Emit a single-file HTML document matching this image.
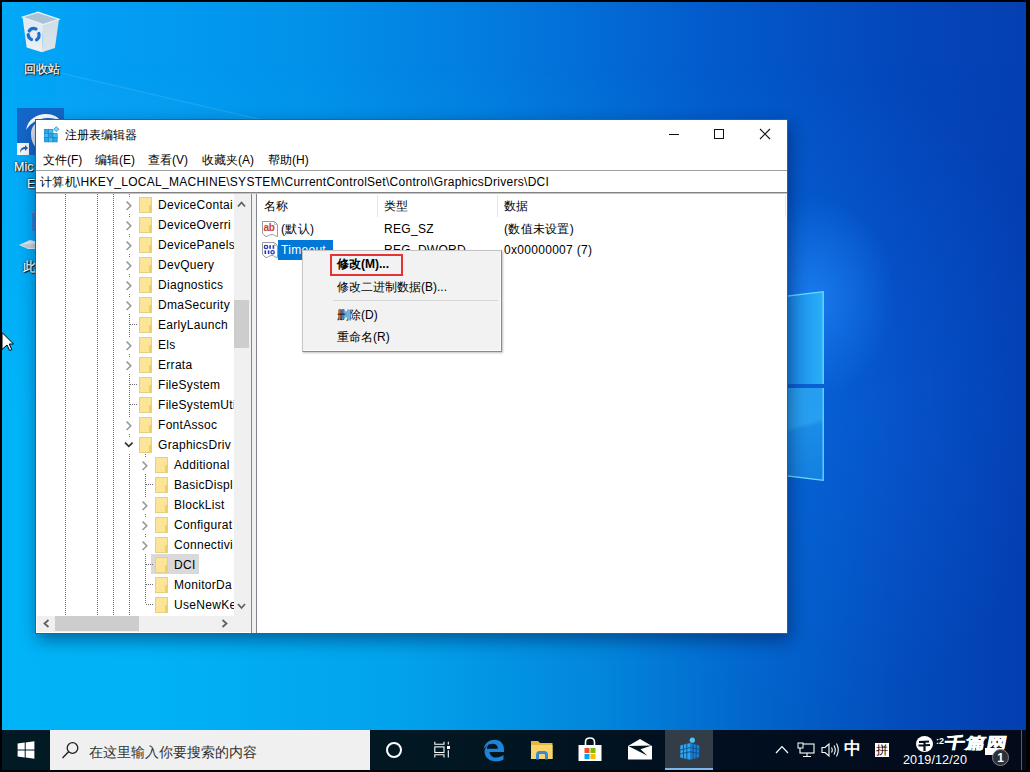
<!DOCTYPE html>
<html><head><meta charset="utf-8">
<style>
*{margin:0;padding:0;box-sizing:border-box}
html,body{width:1030px;height:772px;overflow:hidden;background:#000;font-family:"Liberation Sans",sans-serif}
.abs{position:absolute}
.dt{position:absolute;white-space:nowrap;font-size:12px;line-height:16px;color:#fff;-webkit-text-stroke:0.25px #fff;text-shadow:1px 1px 1px #000,0 0 2px #000,0 0 1px #000}
#desk{position:absolute;left:2px;top:2px;width:1024px;height:728px;overflow:hidden;
 background:linear-gradient(90deg,#02a8f8 0px,#039ef4 98px,#0292ea 298px,#037ade 498px,#035ccd 698px,#0447bb 898px,#0440b2 1024px)}
#desk .bot{position:absolute;left:0;top:0;width:1024px;height:728px;
 background:linear-gradient(90deg,#00b4f8 0px,#00b2f6 148px,#02a2ec 398px,#0286dc 598px,#0266cc 748px,#034cbc 898px,#033eb0 1024px);
 -webkit-mask-image:linear-gradient(180deg,transparent 60px,#000 420px)}
#win{position:absolute;left:35px;top:119px;width:753px;height:515px;background:#fff;border:1px solid #4a5a6a;box-shadow:2px 6px 16px rgba(0,10,50,0.45)}
.t{position:absolute;white-space:nowrap;font-size:12px;color:#000;line-height:16px}
.tl{letter-spacing:0.3px}
#taskbar{position:absolute;left:2px;top:730px;width:1024px;height:40px;background:linear-gradient(90deg,#011a24 0%,#011822 40%,#010f20 70%,#030a1a 100%)}
.fd{position:absolute;width:13px;height:16px;background:#fce596;border:1px solid #e6cf7e}
.fd i{position:absolute;right:0;bottom:0;width:2px;height:7px;background:#f0d060}
.chev{position:absolute;width:6px;height:8px}
.chev:before{content:"";position:absolute;left:-1px;top:1px;width:5px;height:5px;border-right:1.5px solid #a6a6a6;border-top:1.5px solid #a6a6a6;transform:rotate(45deg)}
.chevd{position:absolute;width:9px;height:6px}
.chevd:before{content:"";position:absolute;left:1px;top:-3px;width:6px;height:6px;border-right:1.5px solid #404040;border-bottom:1.5px solid #404040;transform:rotate(45deg)}
.vd{position:absolute;width:1px;background-image:linear-gradient(#707070 50%,transparent 50%);background-size:1px 2px}
.hd{position:absolute;height:1px;background-image:linear-gradient(90deg,#707070 50%,transparent 50%);background-size:2px 1px}
</style></head><body>
<div id="desk">
 <div class="bot"></div>
 <div class="abs" style="left:0;top:0;width:1024px;height:728px;background:radial-gradient(ellipse 260px 320px at 810px 390px,rgba(20,110,255,0.28),rgba(20,110,255,0) 100%),radial-gradient(ellipse 80px 100px at 812px 295px,rgba(40,150,255,0.6),rgba(40,150,255,0) 100%)"></div>
</div>
<svg class="abs" style="left:0;top:40px" width="300" height="90" viewBox="0 40 300 90"><path d="M56,72 L280,124" stroke="rgba(190,235,255,0.13)" stroke-width="1.4"/><polygon points="56,73 280,125 56,125" fill="rgba(120,210,255,0.04)"/></svg>
<!-- logo panes -->
<svg class="abs" style="left:780px;top:285px" width="50" height="200" viewBox="780 285 50 200">
 <defs>
  <linearGradient id="lg1" x1="0" y1="0" x2="1" y2="0"><stop offset="0" stop-color="#1680e2"/><stop offset="0.6" stop-color="#209cf0"/><stop offset="1" stop-color="#2cb0f8"/></linearGradient>
  <linearGradient id="lg2" x1="0" y1="0" x2="0.12" y2="1"><stop offset="0" stop-color="#28a4f2"/><stop offset="0.44" stop-color="#2aa4f2"/><stop offset="0.5" stop-color="#1c90e8"/><stop offset="1" stop-color="#1784e2"/></linearGradient>
 </defs>
 <rect x="780" y="384.5" width="44" height="3" fill="#0c5ed4"/>
 <polygon points="780,297 823.5,291.5 823.5,384 780,384" fill="url(#lg1)"/>
 <polygon points="780,388 823.5,388 823.5,480.5 780,475" fill="url(#lg2)" opacity="0.92"/>
 <path d="M780,297 L823.2,291.7 L823.2,384" fill="none" stroke="#6adaff" stroke-width="1.3"/>
 <path d="M823.2,388 L823.2,480.3 L780,475" fill="none" stroke="#6adaff" stroke-width="1.3"/>
</svg>
<!-- recycle bin -->
<svg class="abs" style="left:16px;top:6px" width="50" height="50" viewBox="16 6 50 50">
 <defs>
  <linearGradient id="rbl" x1="0" y1="0" x2="0" y2="1"><stop offset="0" stop-color="#dfe9f0"/><stop offset="1" stop-color="#eef0f2"/></linearGradient>
  <linearGradient id="rbr" x1="0" y1="0" x2="0" y2="1"><stop offset="0" stop-color="#cfdde8"/><stop offset="1" stop-color="#dde4ea"/></linearGradient>
 </defs>
 <polygon points="22.5,17 43.2,24.5 41.9,52.3 26.7,47.5" fill="url(#rbl)"/>
 <polygon points="43.2,24.5 59,19.3 54.9,48.1 41.9,52.3" fill="url(#rbr)"/>
 <polygon points="22.5,17 38,12.2 59,19.3 43.2,24.5" fill="#b4cadb" stroke="#eaf2f8" stroke-width="1.2"/>
 <polygon points="25,17.2 38,13.4 56,19.4 43,23.2" fill="#a9c2d6"/>
 <g fill="none" stroke="#1c6fd2" stroke-width="3.2" stroke-linecap="round">
  <path d="M29.2,31 A5.6,5.6 0 0 1 36,29"/>
  <path d="M38.8,33.5 A5.6,5.6 0 0 1 36.5,39.8"/>
  <path d="M31.5,39.5 A5.6,5.6 0 0 1 28.2,34.5"/>
 </g>
</svg>
<div class="dt" style="left:24px;top:61px">回收站</div>
<!-- edge icon -->
<div class="abs" style="left:17px;top:108px;width:47px;height:47px;background:#1466c8"></div>
<svg class="abs" style="left:17px;top:108px" width="47" height="47" viewBox="0 0 47 47">
 <path d="M9,22 C11,11 20,6 29,6 C36,6 41,9 44,13 C38,10 30,9 24,11 C17,13 12,17 9,22 Z" fill="#fff"/>
 <path d="M14,26 C14,18 19,14 24,14 C20,18 18,22 18,28 C18,36 22,41 28,44 C20,43 14,36 14,26 Z" fill="#dfe6ee"/>
</svg>
<div class="abs" style="left:17px;top:143px;width:12px;height:12px;background:#f4f6f8"></div>
<svg class="abs" style="left:17px;top:143px" width="12" height="12" viewBox="0 0 12 12"><path d="M3,10 C3,6 5,4 8,4 L8,2 L11,5 L8,8 L8,6 C6,6 4,7 3,10Z" fill="#1f5ea8"/></svg>
<div class="dt" style="left:14px;top:159px;font-size:12.5px">Mic</div>
<div class="dt" style="left:27px;top:176px;font-size:12.5px">E</div>
<!-- this pc -->
<div class="abs" style="left:31px;top:212px;width:6px;height:20px;border:1.5px solid #5a8ec0;background:#2c7fd4"></div>
<svg class="abs" style="left:18px;top:239px" width="20" height="11" viewBox="0 0 20 11"><polygon points="1,6 12,1 20,3 20,10 10,10" fill="#dfe8ee"/><path d="M4,6 L18,6 M6,8 L18,8" stroke="#9fb4c4" stroke-width="0.8"/></svg>
<div class="dt" style="left:23px;top:259px;font-size:12.5px">此</div>
<!-- cursor -->
<svg class="abs" style="left:1px;top:331px" width="16" height="22" viewBox="0 0 16 22"><path d="M1,1.5 L12.5,13 L8.2,13 L10.8,18.5 L8.6,19.5 L6,14 L1,18.5 Z" fill="#fff" stroke="#000" stroke-width="1"/></svg>

<div id="win"></div>
<!-- regedit icon -->
<svg class="abs" style="left:43px;top:125px" width="18" height="18" viewBox="0 0 18 18">
 <g stroke="#1a88c8" stroke-width="0.7">
  <rect x="1.3" y="4.3" width="4.3" height="4.2" fill="#2aa6e4"/><rect x="5.6" y="4.3" width="4.3" height="4.2" fill="#46bdf0"/>
  <rect x="1.3" y="8.5" width="4.3" height="4.2" fill="#46bdf0"/><rect x="5.6" y="8.5" width="4.3" height="4.2" fill="#2aa6e4"/><rect x="9.9" y="8.5" width="4.3" height="4.2" fill="#46bdf0"/>
  <rect x="1.3" y="12.7" width="4.3" height="4.2" fill="#2aa6e4"/><rect x="5.6" y="12.7" width="4.3" height="4.2" fill="#46bdf0"/><rect x="9.9" y="12.7" width="4.3" height="4.2" fill="#2aa6e4"/>
 </g>
 <rect x="11.6" y="2.4" width="3.6" height="3.6" transform="rotate(45 13.4 4.2)" fill="#7ed6fa" stroke="#1a88c8" stroke-width="0.7"/>
</svg>
<!-- caption buttons -->
<div class="abs" style="left:669px;top:134px;width:10px;height:1px;background:#111"></div>
<div class="abs" style="left:714px;top:129px;width:10px;height:10px;border:1px solid #111"></div>
<svg class="abs" style="left:759px;top:128px" width="12" height="12" viewBox="0 0 12 12"><path d="M1,1 L11,11 M11,1 L1,11" stroke="#111" stroke-width="1.1"/></svg>
<!-- title -->
<div class="t" style="left:65px;top:127px">注册表编辑器</div>
<div class="t" style="left:43px;top:152px">文件(F)</div>
<div class="t" style="left:95px;top:152px">编辑(E)</div>
<div class="t" style="left:148px;top:152px">查看(V)</div>
<div class="t" style="left:202px;top:152px">收藏夹(A)</div>
<div class="t" style="left:268px;top:152px">帮助(H)</div>
<!-- address -->
<div class="abs" style="left:36px;top:170px;width:751px;height:23px;border-top:1px solid #a0a0a0;border-bottom:1px solid #828282"></div>
<div class="t tl" style="left:40px;top:174px;letter-spacing:0.28px">计算机\HKEY_LOCAL_MACHINE\SYSTEM\CurrentControlSet\Control\GraphicsDrivers\DCI</div>
<!-- panes -->
<div class="abs" style="left:36px;top:193px;width:751px;height:440px;background:#f0f0f0"></div>
<div class="abs" style="left:36px;top:193px;width:216px;height:440px;background:#fff;border-right:1px solid #828790"></div>
<div class="abs" style="left:256px;top:193px;width:531px;height:440px;background:#fff;border-left:1px solid #828790"></div>
<div class="abs" style="left:36px;top:193px;width:751px;height:1px;background:#c4c4c4"></div>
<!-- tree clip -->
<div class="abs" style="left:37px;top:194px;width:197px;height:422px;overflow:hidden">
 <div class="abs" style="left:-37px;top:-194px;width:400px;height:700px">
  <div class="vd" style="left:65px;top:194px;height:422px"></div>
  <div class="vd" style="left:97px;top:194px;height:422px"></div>
  <div class="vd" style="left:113px;top:194px;height:422px"></div>
  <div class="vd" style="left:129px;top:194px;height:422px"></div>
  <div class="vd" style="left:145px;top:454px;height:150px"></div>
<div class="fd" style="left:139px;top:197px"><i></i></div>
<div class="t tl" style="left:158px;top:197px">DeviceContai</div>
<svg class="abs" style="left:124px;top:197px" width="11" height="16" viewBox="0 0 11 16"><rect width="11" height="16" fill="#fff"/><path d="M2.6,4.6 L6.8,8.8 L2.6,13" fill="none" stroke="#9a9a9a" stroke-width="1.6"/></svg>
<div class="fd" style="left:139px;top:217px"><i></i></div>
<div class="t tl" style="left:158px;top:217px">DeviceOverri</div>
<svg class="abs" style="left:124px;top:217px" width="11" height="16" viewBox="0 0 11 16"><rect width="11" height="16" fill="#fff"/><path d="M2.6,4.6 L6.8,8.8 L2.6,13" fill="none" stroke="#9a9a9a" stroke-width="1.6"/></svg>
<div class="fd" style="left:139px;top:237px"><i></i></div>
<div class="t tl" style="left:158px;top:237px">DevicePanels</div>
<svg class="abs" style="left:124px;top:237px" width="11" height="16" viewBox="0 0 11 16"><rect width="11" height="16" fill="#fff"/><path d="M2.6,4.6 L6.8,8.8 L2.6,13" fill="none" stroke="#9a9a9a" stroke-width="1.6"/></svg>
<div class="fd" style="left:139px;top:257px"><i></i></div>
<div class="t tl" style="left:158px;top:257px">DevQuery</div>
<svg class="abs" style="left:124px;top:257px" width="11" height="16" viewBox="0 0 11 16"><rect width="11" height="16" fill="#fff"/><path d="M2.6,4.6 L6.8,8.8 L2.6,13" fill="none" stroke="#9a9a9a" stroke-width="1.6"/></svg>
<div class="fd" style="left:139px;top:277px"><i></i></div>
<div class="t tl" style="left:158px;top:277px">Diagnostics</div>
<svg class="abs" style="left:124px;top:277px" width="11" height="16" viewBox="0 0 11 16"><rect width="11" height="16" fill="#fff"/><path d="M2.6,4.6 L6.8,8.8 L2.6,13" fill="none" stroke="#9a9a9a" stroke-width="1.6"/></svg>
<div class="fd" style="left:139px;top:297px"><i></i></div>
<div class="t tl" style="left:158px;top:297px">DmaSecurity</div>
<svg class="abs" style="left:124px;top:297px" width="11" height="16" viewBox="0 0 11 16"><rect width="11" height="16" fill="#fff"/><path d="M2.6,4.6 L6.8,8.8 L2.6,13" fill="none" stroke="#9a9a9a" stroke-width="1.6"/></svg>
<div class="fd" style="left:139px;top:317px"><i></i></div>
<div class="t tl" style="left:158px;top:317px">EarlyLaunch</div>
<div class="hd" style="left:130px;top:324px;width:8px"></div>
<div class="fd" style="left:139px;top:337px"><i></i></div>
<div class="t tl" style="left:158px;top:337px">Els</div>
<svg class="abs" style="left:124px;top:337px" width="11" height="16" viewBox="0 0 11 16"><rect width="11" height="16" fill="#fff"/><path d="M2.6,4.6 L6.8,8.8 L2.6,13" fill="none" stroke="#9a9a9a" stroke-width="1.6"/></svg>
<div class="fd" style="left:139px;top:357px"><i></i></div>
<div class="t tl" style="left:158px;top:357px">Errata</div>
<svg class="abs" style="left:124px;top:357px" width="11" height="16" viewBox="0 0 11 16"><rect width="11" height="16" fill="#fff"/><path d="M2.6,4.6 L6.8,8.8 L2.6,13" fill="none" stroke="#9a9a9a" stroke-width="1.6"/></svg>
<div class="fd" style="left:139px;top:377px"><i></i></div>
<div class="t tl" style="left:158px;top:377px">FileSystem</div>
<div class="hd" style="left:130px;top:384px;width:8px"></div>
<div class="fd" style="left:139px;top:397px"><i></i></div>
<div class="t tl" style="left:158px;top:397px">FileSystemUti</div>
<div class="hd" style="left:130px;top:404px;width:8px"></div>
<div class="fd" style="left:139px;top:417px"><i></i></div>
<div class="t tl" style="left:158px;top:417px">FontAssoc</div>
<svg class="abs" style="left:124px;top:417px" width="11" height="16" viewBox="0 0 11 16"><rect width="11" height="16" fill="#fff"/><path d="M2.6,4.6 L6.8,8.8 L2.6,13" fill="none" stroke="#9a9a9a" stroke-width="1.6"/></svg>
<div class="fd" style="left:139px;top:437px"><i></i></div>
<div class="t tl" style="left:158px;top:437px">GraphicsDriv</div>
<svg class="abs" style="left:124px;top:437px" width="11" height="16" viewBox="0 0 11 16"><rect width="11" height="16" fill="#fff"/><path d="M1,5.6 L4.8,9.4 L8.6,5.6" fill="none" stroke="#333" stroke-width="1.7"/></svg>
<div class="fd" style="left:155px;top:457px"><i></i></div>
<div class="t tl" style="left:174px;top:457px">Additional</div>
<svg class="abs" style="left:140px;top:457px" width="11" height="16" viewBox="0 0 11 16"><rect width="11" height="16" fill="#fff"/><path d="M2.6,4.6 L6.8,8.8 L2.6,13" fill="none" stroke="#9a9a9a" stroke-width="1.6"/></svg>
<div class="fd" style="left:155px;top:477px"><i></i></div>
<div class="t tl" style="left:174px;top:477px">BasicDispl</div>
<div class="hd" style="left:146px;top:484px;width:8px"></div>
<div class="fd" style="left:155px;top:497px"><i></i></div>
<div class="t tl" style="left:174px;top:497px">BlockList</div>
<svg class="abs" style="left:140px;top:497px" width="11" height="16" viewBox="0 0 11 16"><rect width="11" height="16" fill="#fff"/><path d="M2.6,4.6 L6.8,8.8 L2.6,13" fill="none" stroke="#9a9a9a" stroke-width="1.6"/></svg>
<div class="fd" style="left:155px;top:517px"><i></i></div>
<div class="t tl" style="left:174px;top:517px">Configurat</div>
<svg class="abs" style="left:140px;top:517px" width="11" height="16" viewBox="0 0 11 16"><rect width="11" height="16" fill="#fff"/><path d="M2.6,4.6 L6.8,8.8 L2.6,13" fill="none" stroke="#9a9a9a" stroke-width="1.6"/></svg>
<div class="fd" style="left:155px;top:537px"><i></i></div>
<div class="t tl" style="left:174px;top:537px">Connectivi</div>
<svg class="abs" style="left:140px;top:537px" width="11" height="16" viewBox="0 0 11 16"><rect width="11" height="16" fill="#fff"/><path d="M2.6,4.6 L6.8,8.8 L2.6,13" fill="none" stroke="#9a9a9a" stroke-width="1.6"/></svg>
<div class="abs" style="left:151px;top:554px;width:48px;height:20px;background:#d9d9d9"></div>
<div class="fd" style="left:155px;top:557px"><i></i></div>
<div class="t tl" style="left:174px;top:557px">DCI</div>
<div class="hd" style="left:146px;top:564px;width:8px"></div>
<div class="fd" style="left:155px;top:577px"><i></i></div>
<div class="t tl" style="left:174px;top:577px">MonitorDa</div>
<div class="hd" style="left:146px;top:584px;width:8px"></div>
<div class="fd" style="left:155px;top:597px"><i></i></div>
<div class="t tl" style="left:174px;top:597px">UseNewKe</div>
<div class="hd" style="left:146px;top:604px;width:8px"></div>
 </div>
</div>
<!-- tree v scrollbar -->
<div class="abs" style="left:234px;top:194px;width:17px;height:422px;background:#f0f0f0"></div>
<div class="abs" style="left:234px;top:300px;width:15px;height:48px;background:#cdcdcd"></div>
<!-- tree h scrollbar -->
<div class="abs" style="left:37px;top:616px;width:197px;height:16px;background:#f0f0f0"></div>
<div class="abs" style="left:55px;top:616px;width:84px;height:15px;background:#cdcdcd"></div>
<svg class="abs" style="left:0;top:0;width:300px;height:640px" width="300" height="640" viewBox="0 0 300 640">
 <path d="M238,206.5 L241.5,202.5 L245,206.5" fill="none" stroke="#606060" stroke-width="1.8"/>
 <path d="M238,604 L241.5,608 L245,604" fill="none" stroke="#606060" stroke-width="1.8"/>
 <path d="M48.5,620 L44.5,623.5 L48.5,627" fill="none" stroke="#606060" stroke-width="1.8"/>
 <path d="M222.5,620 L226.5,623.5 L222.5,627" fill="none" stroke="#606060" stroke-width="1.8"/>
</svg>
<div class="abs" style="left:234px;top:616px;width:17px;height:16px;background:#f0f0f0"></div>
<!-- list -->
<div class="t" style="left:264px;top:198px">名称</div>
<div class="abs" style="left:377px;top:195px;width:1px;height:22px;background:#e5e5e5"></div>
<div class="t" style="left:384px;top:198px">类型</div>
<div class="abs" style="left:497px;top:195px;width:1px;height:22px;background:#e5e5e5"></div>
<div class="t" style="left:504px;top:198px">数据</div>
<div class="abs" style="left:785px;top:195px;width:1px;height:22px;background:#ececec"></div>
<svg class="abs" style="left:258px;top:217px" width="22" height="44" viewBox="258 217 22 44">
 <g fill="#fff" stroke="#9a9a9a" stroke-width="1">
  <path d="M262.5,221.5 L274.5,221.5 L277.5,224.5 L277.5,236.5 C275,236.5 274.5,234.5 272,234.5 C269,234.5 268.5,236.5 266,236.5 C264.5,236.5 263.5,233.5 262.5,233.5 Z"/>
  <path d="M262.5,242.5 L274.5,242.5 L277.5,245.5 L277.5,257.5 C275,257.5 274.5,255.5 272,255.5 C269,255.5 268.5,257.5 266,257.5 C264.5,257.5 263.5,254.5 262.5,254.5 Z"/>
 </g>
 <path d="M274.5,221.5 L274.5,224.5 L277.5,224.5 M274.5,242.5 L274.5,245.5 L277.5,245.5" fill="none" stroke="#c0c0c0" stroke-width="1"/>
 <text x="263.6" y="231.2" font-family="Liberation Sans" font-size="10" font-weight="bold" fill="#c8402a" letter-spacing="-0.3">ab</text>
 <g fill="#2a3ab8">
  <ellipse cx="266" cy="247" rx="1.7" ry="1.6" fill="none" stroke="#2a3ab8" stroke-width="1.3"/>
  <rect x="269.3" y="245.2" width="1.6" height="3.6"/><rect x="272.6" y="245.2" width="1.6" height="3.6"/>
  <rect x="264.5" y="250.4" width="1.6" height="3.6"/><rect x="267.8" y="250.4" width="1.6" height="3.6"/>
  <ellipse cx="272.6" cy="252.2" rx="1.7" ry="1.6" fill="none" stroke="#2a3ab8" stroke-width="1.3"/>
 </g>
</svg>
<div class="t tl" style="left:281px;top:221px">(默认)</div>
<div class="t tl" style="left:384px;top:221px">REG_SZ</div>
<div class="t tl" style="left:504px;top:221px">(数值未设置)</div>
<div class="abs" style="left:278px;top:240px;width:55px;height:20px;background:#0078d7"></div>
<div class="t tl" style="left:281px;top:242px;color:#fff">Timeout</div>
<div class="t tl" style="left:384px;top:242px">REG_DWORD</div>
<div class="t tl" style="left:504px;top:242px">0x00000007 (7)</div>
<!-- context menu -->
<div class="abs" style="left:302px;top:250px;width:200px;height:102px;background:#f2f2f2;border:1px solid #c4c4c4;border-right-color:#8a8a8a;border-bottom-color:#8a8a8a;box-shadow:inset -1px -1px 0 #fafafa,1px 1px 2px rgba(0,0,0,0.25)"></div>
<div class="abs" style="left:330px;top:254px;width:73px;height:22px;border:2.5px solid #e53232"></div>
<div class="t" style="left:337px;top:256px;font-weight:bold">修改(M)...</div>
<div class="t" style="left:337px;top:279px">修改二进制数据(B)...</div>
<div class="abs" style="left:333px;top:300px;width:165px;height:1px;background:#d7d7d7"></div>
<div class="t" style="left:337px;top:307px">删除(D)</div>
<div class="t" style="left:337px;top:329px">重命名(R)</div>
<div id="taskbar"></div>
<div class="abs" style="left:0;top:730px;width:1030px;height:42px">
 <svg class="abs" style="left:17px;top:11px" width="18" height="18" viewBox="0 0 18 18"><path d="M0.6,2.6 L7.7,1.6 L7.7,8.5 L0.6,8.5Z M8.7,1.45 L17.4,0.2 L17.4,8.5 L8.7,8.5Z M0.6,9.5 L7.7,9.5 L7.7,16.4 L0.6,15.4Z M8.7,9.5 L17.4,9.5 L17.4,17.8 L8.7,16.55Z" fill="#fff"/></svg>
 <div class="abs" style="left:50px;top:0;width:320px;height:40px;background:#f0f0f0"></div>
 <svg class="abs" style="left:61px;top:11px" width="19" height="19" viewBox="0 0 19 19"><circle cx="11.5" cy="7" r="5.3" fill="none" stroke="#222" stroke-width="1.3"/><path d="M7.6,10.8 L1.5,17" stroke="#222" stroke-width="1.4"/></svg>
 <div class="abs" style="left:89px;top:13px;font-size:13.9px;line-height:18px;color:#333;white-space:nowrap">在这里输入你要搜索的内容</div>
 <div class="abs" style="left:386px;top:12px;width:16px;height:16px;border:2px solid #fff;border-radius:50%"></div>
 <svg class="abs" style="left:430px;top:10px" width="24" height="20" viewBox="430 740 24 20">
  <path d="M434.8,741.8 L434.8,744.3 L444,744.3 L444,741.8 M434.8,757.4 L434.8,754.8 L444,754.8 L444,757.4 M448.3,741.8 L448.3,744.6 M448.3,750.2 L448.3,757.4" fill="none" stroke="#fff" stroke-width="1.1"/>
  <rect x="434.8" y="746.9" width="9.2" height="5.6" fill="none" stroke="#fff" stroke-width="1.1"/>
  <rect x="447" y="746" width="3" height="3" fill="#fff"/>
 </svg>
 <svg class="abs" style="left:482px;top:9px" width="23" height="23" viewBox="0 0 23 23">
  <path d="M1.5,10.5 C2.5,4 7.5,0.8 12.5,0.8 C18.5,0.8 22,5 22,10.5 L22,13 L7.6,13 C7.8,16.5 10.5,18.5 14,18.5 C16.8,18.5 19.5,17.5 21.5,16 L21.5,20.5 C19.5,21.8 16.5,22.4 13.5,22.4 C6.5,22.4 2.6,17.8 2.6,12.6 C2.6,9.6 4,7 6.4,5.4 C5.4,6.8 4.9,8.3 4.9,9.7 L15.8,9.7 C15.8,6.6 13.8,4.8 10.6,4.8 C6.6,4.8 3.2,7.6 1.5,10.5 Z" fill="#1d82da"/>
 </svg>
 <svg class="abs" style="left:528px;top:8px" width="28" height="26" viewBox="528 738 28 26"><path d="M531,741 L538,741 L540,743 L552.5,743 L552.5,759 L531,759Z" fill="#e8b63c"/><rect x="531" y="745" width="21.5" height="14" fill="#f8d46c"/><path d="M537.5,759.5 L537.5,755 Q537.5,752.5 540,752.5 L544,752.5 Q546.5,752.5 546.5,755 L546.5,759.5" fill="none" stroke="#3a8ad6" stroke-width="3"/></svg>
 <svg class="abs" style="left:577px;top:7px" width="26" height="25" viewBox="0 0 26 25"><path d="M8.5,8 L8.5,5 C8.5,2.2 10.3,1 13,1 C15.7,1 17.5,2.2 17.5,5 L17.5,8" fill="none" stroke="#fff" stroke-width="1.6"/><rect x="1.5" y="8" width="23" height="16" fill="#fff"/><rect x="7.5" y="11" width="5" height="5" fill="#f25022"/><rect x="13.5" y="11" width="5" height="5" fill="#7fba00"/><rect x="7.5" y="17" width="5" height="5" fill="#00a4ef"/><rect x="13.5" y="17" width="5" height="5" fill="#ffb900"/></svg>
 <svg class="abs" style="left:626px;top:7px" width="28" height="26" viewBox="626 737 28 26"><path d="M628,746 L640,739 L652,746 L652,759.5 L628,759.5 Z" fill="#fff"/><polygon points="628.3,746 651.7,745.6 640.5,749.2 647.5,755.8" fill="#011520"/></svg>
 <div class="abs" style="left:665px;top:0;width:48px;height:40px;background:#333d47"></div>
 <div class="abs" style="left:665px;top:38px;width:48px;height:2px;background:#79b7ee"></div>
 <svg class="abs" style="left:676px;top:5px" width="28" height="28" viewBox="676 735 28 28">
 <polygon points="680.3,745.5 690,743 690,759.8 680.3,757.5" fill="#2ea4ea"/>
 <polygon points="690,743 699.4,745.5 699,757.2 690,759.8" fill="#1c7cce"/>
 <g stroke="#0e4f8a" stroke-width="0.9" fill="none">
  <path d="M683.5,744.7 L683.5,758.3 M686.8,743.8 L686.8,759 M680.3,750 L690,747.6 M680.3,753.8 L690,751.8"/>
  <path d="M693.2,743.8 L693,759 M696.3,744.6 L696.1,758.2 M690,747.6 L699.3,749.5 M690,751.8 L699.1,753.4"/>
 </g>
 <circle cx="692.3" cy="740.2" r="2.6" fill="#4cc4f8"/>
</svg>
 <svg class="abs" style="left:774px;top:14px" width="16" height="11" viewBox="0 0 16 11"><path d="M2,9 L8,2.6 L14,9" fill="none" stroke="#fff" stroke-width="1.2"/></svg>
 <svg class="abs" style="left:797px;top:12px" width="20" height="16" viewBox="0 0 20 16"><rect x="3" y="2" width="14" height="9" fill="none" stroke="#fff" stroke-width="1.1"/><path d="M10,11 L10,14 M6,14.5 L14,14.5" stroke="#fff" stroke-width="1.1"/><rect x="1" y="1" width="5" height="5" fill="#011520" stroke="#fff" stroke-width="1"/></svg>
 <svg class="abs" style="left:820px;top:12px" width="20" height="16" viewBox="0 0 20 16"><path d="M2,5.5 L5,5.5 L9,2 L9,14 L5,10.5 L2,10.5 Z" fill="none" stroke="#fff" stroke-width="1.1"/><path d="M11.5,5.5 Q13,8 11.5,10.5 M14,3.5 Q16.5,8 14,12.5 M16.5,1.5 Q20,8 16.5,14.5" fill="none" stroke="#fff" stroke-width="1.1"/></svg>
 <div class="abs" style="left:844px;top:9px;font-size:17px;line-height:20px;color:#fff;font-weight:bold">中</div>
 <div class="abs" style="left:875px;top:13px;width:14px;height:14px;background:#fff"></div>
 <div class="abs" style="left:875px;top:12px;width:14px;font-size:12px;line-height:16px;color:#000;text-align:center">拼</div>
 <div class="abs" style="left:903px;top:22px;font-size:12.6px;line-height:16px;color:#fff;letter-spacing:0.1px">2019/12/20</div>
 <div class="abs" style="left:1021px;top:0;width:1px;height:40px;background:#555d66"></div>
</div>
<!-- watermark -->
<div class="abs" style="left:936px;top:735px;font-size:9px;line-height:12px;color:#fff;font-weight:bold">:2</div>
<div class="abs" style="left:916px;top:736px;width:17px;height:16px;border-radius:50%;background:#fff"></div>
<svg class="abs" style="left:916px;top:736px" width="17" height="16" viewBox="0 0 17 16"><path d="M3,6 L13,5.5 M2.5,9.5 L14,9 M8.5,5.5 L8.5,15" stroke="#06121b" stroke-width="2.2"/></svg>
<div class="abs" style="left:946px;top:735px;font-size:20px;line-height:20px;color:#fff;font-weight:bold;letter-spacing:1px;-webkit-text-stroke:0.7px #fff;transform:scaleY(0.76) skewX(-8deg);transform-origin:0 0">千篇网</div>
<div class="abs" style="left:985px;top:748px;width:15px;height:7px;background:#fff"></div>
<div class="abs" style="left:992px;top:749px;width:17px;height:17px;border-radius:50%;background:#2c3138;border:1.5px solid #80868e"></div>
<div class="abs" style="left:992px;top:750px;width:17px;text-align:center;font-size:12px;line-height:16px;color:#fff;font-weight:bold">1</div>
</body></html>
